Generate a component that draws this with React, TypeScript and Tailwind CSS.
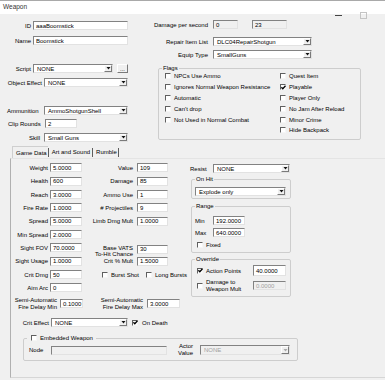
import type { ReactNode } from "react";

const sunken = "border border-t-[#828282] border-l-[#828282] border-r-[#e2e2e2] border-b-[#e2e2e2]";

const Field = ({ value = "", className = "", disabled = false, flat = false }: { value?: string; className?: string; disabled?: boolean; flat?: boolean }) => (
  <div
    className={`${className} shrink-0 flex items-center pl-[2px] whitespace-nowrap overflow-hidden ${sunken} ${
      disabled ? "bg-[#f0f0f0] text-[#a0a0a0]" : flat ? "bg-[#f0f0f0]" : "bg-white"
    }`}
  >
    {value}
  </div>
);

const Combo = ({ value, className = "", disabled = false }: { value: string; className?: string; disabled?: boolean }) => (
  <div className={`${className} shrink-0 flex ${sunken} ${disabled ? "bg-[#f0f0f0] text-[#a0a0a0]" : "bg-white"}`}>
    <span className="flex-1 min-w-0 flex items-center pl-[3px] whitespace-nowrap overflow-hidden">{value}</span>
    <span className="w-[8px] shrink-0 flex items-center justify-center bg-[#f0f0f0] border border-t-white border-l-white border-r-[#7a7a7a] border-b-[#7a7a7a]">
      <svg width="5" height="3" viewBox="0 0 5 3">
        <path d="M0.5 0h4L2.5 2.6z" fill={disabled ? "#a8a8a8" : "#111"} />
      </svg>
    </span>
  </div>
);

const Check = ({ checked = false }: { checked?: boolean }) => (
  <span className="w-[6px] h-[6px] shrink-0 flex items-center justify-center bg-white border border-t-[#5f5f5f] border-l-[#5f5f5f] border-r-[#f6f6f6] border-b-[#f6f6f6]">
    {checked && (
      <svg width="5" height="5" viewBox="0 0 5 5" className="shrink-0 overflow-visible">
        <path d="M0.4 2.3 1.8 3.8 4.5 0.8" stroke="#000" strokeWidth="1.3" fill="none" />
      </svg>
    )}
  </span>
);

const CheckItem = ({ label, checked = false, className = "" }: { label: ReactNode; checked?: boolean; className?: string }) => (
  <div className={`flex items-center gap-[3px] ${className}`}>
    <Check checked={checked} />
    <span className="whitespace-nowrap">{label}</span>
  </div>
);

const Group = ({ title, className = "", children }: { title: ReactNode; className?: string; children?: ReactNode }) => (
  <fieldset className={`${className} shrink-0 border border-[#cdcdcd] rounded-[2px]`}>
    <legend className="ml-[3px] px-[1px] h-[6px] leading-[6px] flex items-center">{title}</legend>
    {children}
  </fieldset>
);

const StatRow = ({ l1, v1, l2, v2 }: { l1: string; v1: string; l2?: string; v2?: string }) => (
  <div className="h-[13.33px] flex items-center">
    <span className="w-[37px] text-right whitespace-nowrap">{l1}</span>
    <Field value={v1} className="ml-[2px] w-[32px] h-[9px]" />
    {l2 && <span className="w-[51px] text-right whitespace-nowrap">{l2}</span>}
    {v2 !== undefined && <Field value={v2} className="ml-[4px] w-[31px] h-[9px]" />}
  </div>
);

export default function App() {
  return (
    <div className="relative w-[385px] h-[380px] overflow-hidden bg-[#f0f0f0] text-[6px] leading-none text-black font-['Liberation_Sans',Arial,sans-serif] flex flex-col">
      {/* title bar */}
      <div className="h-[14px] shrink-0 bg-white border-t border-[#a9a9a9] flex items-center pl-[3px] text-[6.5px] text-[#333]">Weapon</div>
      <div className="absolute top-[15px] left-[335px] w-[7px] h-px bg-[#444]" />
      <div className="absolute top-[12px] left-[360px] w-[7px] h-[7px] border border-[#c4c4c4]" />

      {/* top section */}
      <div className="flex h-[132px] shrink-0">
        <div className="w-[150px] shrink-0 flex flex-col">
          <div className="flex items-center mt-[7px]">
            <span className="w-[31px] text-right">ID</span>
            <Field value="aaaBoomstick" className="ml-[2px] w-[95px] h-[9px]" />
          </div>
          <div className="flex items-center mt-[6px]">
            <span className="w-[31px] text-right">Name</span>
            <Field value="Boomstick" className="ml-[2px] w-[95px] h-[9px]" />
          </div>
          <div className="flex items-center mt-[19px]">
            <span className="w-[31px] text-right">Script</span>
            <Combo value="NONE" className="ml-[2px] w-[80px] h-[9px]" />
            <div className="ml-[4px] w-[11px] h-[9px] bg-[#f0f0f0] border border-t-white border-l-white border-r-[#7a7a7a] border-b-[#7a7a7a] flex items-end justify-center leading-[6px]">...</div>
          </div>
          <div className="flex items-center mt-[5px]">
            <span className="w-[42px] text-right whitespace-nowrap">Object Effect</span>
            <Combo value="NONE" className="ml-[2px] w-[84px] h-[9px]" />
          </div>
          <div className="flex items-center mt-[19px]">
            <span className="w-[37px] pl-[7px] whitespace-nowrap">Ammunition</span>
            <Combo value="AmmoShotgunShell" className="ml-[7px] w-[84px] h-[9px]" />
          </div>
          <div className="flex items-center mt-[4px]">
            <span className="w-[43px] pl-[8px] whitespace-nowrap">Clip Rounds</span>
            <Field value="2" className="ml-[2px] w-[32px] h-[9px]" />
          </div>
          <div className="flex items-center mt-[5px]">
            <span className="w-[40px] text-right">Skill</span>
            <Combo value="Small Guns" className="ml-[4px] w-[84px] h-[9px]" />
          </div>
        </div>

        <div className="flex-1 flex flex-col">
          <div className="flex items-center mt-[6px]">
            <span className="w-[58px] text-right whitespace-nowrap">Damage per second</span>
            <Field value="0" flat className="ml-[5px] w-[25px] h-[9px]" />
            <Field value="23" flat className="ml-[14px] w-[35px] h-[9px]" />
          </div>
          <div className="flex items-center mt-[8px]">
            <span className="w-[58px] text-right whitespace-nowrap">Repair Item List</span>
            <Combo value="DLC04RepairShotgun" className="ml-[5px] w-[99px] h-[9px]" />
          </div>
          <div className="flex items-center mt-[4px]">
            <span className="w-[58px] text-right whitespace-nowrap">Equip Type</span>
            <Combo value="SmallGuns" className="ml-[5px] w-[99px] h-[9px]" />
          </div>
          <Group title="Flags" className="mt-[6px] ml-[8px] w-[203px] h-[75px]">
            <div className="grid grid-cols-[115px_1fr] pl-[6px]">
              <CheckItem label="NPCs Use Ammo" className="h-[10.8px]" />
              <CheckItem label="Quest Item" className="h-[10.8px]" />
              <CheckItem label="Ignores Normal Weapon Resistance" className="h-[10.8px]" />
              <CheckItem label="Playable" checked className="h-[10.8px]" />
              <CheckItem label="Automatic" className="h-[10.8px]" />
              <CheckItem label="Player Only" className="h-[10.8px]" />
              <CheckItem label="Can't drop" className="h-[10.8px]" />
              <CheckItem label="No Jam After Reload" className="h-[10.8px]" />
              <CheckItem label="Not Used in Normal Combat" className="h-[10.8px]" />
              <CheckItem label="Minor Crime" className="h-[10.8px]" />
              <div className="h-[10.8px]" />
              <CheckItem label="Hide Backpack" className="h-[10.8px]" />
            </div>
          </Group>
        </div>
      </div>

      {/* tabs */}
      <div className="flex h-[12px] shrink-0 ml-[12px] items-stretch">
        <div className="border-l border-t border-[#cfcfcf] pl-[3px] pr-[1px] flex items-center bg-[#f0f0f0]">Game Data</div>
        <span className="w-px h-[9px] self-center bg-[#5e5e5e]" />
        <div className="pl-[3px] pr-[2px] flex items-center">Art and Sound</div>
        <span className="w-px h-[9px] self-center bg-[#5e5e5e]" />
        <div className="pl-[3px] pr-[1px] flex items-center">Rumble</div>
        <span className="w-px h-[9px] self-center bg-[#5e5e5e]" />
      </div>

      {/* tab page */}
      <div className="flex-1 ml-[10px] mb-[2px] border-l border-b border-t border-l-[#b0b0b0] border-b-[#d6d6d6] border-t-[#e4e4e4] flex flex-col">
        <div className="flex h-[138px] shrink-0">
          <div className="w-[179px] shrink-0 flex flex-col pt-[2.3px]">
            <StatRow l1="Weight" v1="5.0000" l2="Value" v2="109" />
            <StatRow l1="Health" v1="600" l2="Damage" v2="85" />
            <StatRow l1="Reach" v1="3.0000" l2="Ammo Use" v2="1" />
            <StatRow l1="Fire Rate" v1="1.0000" l2="# Projectiles" v2="9" />
            <StatRow l1="Spread" v1="5.0000" l2="Limb Dmg Mult" v2="1.0000" />
            <StatRow l1="Min Spread" v1="2.0000" />
            <div className="h-[13.33px] flex items-center">
              <span className="w-[37px] text-right whitespace-nowrap">Sight FOV</span>
              <Field value="70.0000" className="ml-[2px] w-[32px] h-[9px]" />
              <span className="w-[51px] text-right whitespace-nowrap leading-[6px] mt-[6px]">
                Base VATS
                <br />
                To-Hit Chance
              </span>
              <Field value="30" className="ml-[4px] w-[31px] h-[9px] mt-[3px]" />
            </div>
            <StatRow l1="Sight Usage" v1="1.0000" l2="Crit % Mult" v2="1.5000" />
            <div className="h-[13.33px] flex items-center">
              <span className="w-[37px] text-right whitespace-nowrap">Crit Dmg</span>
              <Field value="50" className="ml-[2px] w-[32px] h-[9px]" />
              <CheckItem label="Burst Shot" className="ml-[20px]" />
              <CheckItem label="Long Bursts" className="ml-[7px]" />
            </div>
            <StatRow l1="Aim Arc" v1="0" />
          </div>

          <div className="flex-1 flex flex-col">
            <div className="flex items-center mt-[5px]">
              <span className="w-[23px]">Resist</span>
              <Combo value="NONE" className="w-[77px] h-[9px]" />
            </div>
            <Group title="On Hit" className="mt-[3px] ml-[1px] w-[100px] pb-[2px]">
              <Combo value="Explode only" className="mt-[5px] ml-[3px] w-[91px] h-[9px]" />
            </Group>
            <Group title="Range" className="mt-[4px] ml-[1px] w-[100px] pb-[3px]">
              <div className="flex items-center mt-[7px] pl-[3px]">
                <span className="w-[18px]">Min</span>
                <Field value="192.0000" className="w-[32px] h-[9px]" />
              </div>
              <div className="flex items-center mt-[3px] pl-[3px]">
                <span className="w-[18px]">Max</span>
                <Field value="640.0000" className="w-[32px] h-[9px]" />
              </div>
              <CheckItem label="Fixed" className="mt-[4px] h-[8px] ml-[5px]" />
            </Group>
            <Group title="Override" className="mt-[3px] ml-[1px] w-[100px] pb-[6px]">
              <div className="flex items-center mt-[3px] h-[11px] pl-[5px] pr-[4px]">
                <CheckItem label="Action Points" checked />
                <Field value="40.0000" className="ml-auto w-[33px] h-[11px]" />
              </div>
              <div className="flex items-center mt-[5px] h-[9px] pl-[5px] pr-[4px]">
                <Check />
                <span className="ml-[3px] leading-[7px] whitespace-nowrap">
                  Damage to
                  <br />
                  Weapon Mult
                </span>
                <Field value="0.0000" disabled className="ml-auto w-[33px] h-[9px]" />
              </div>
            </Group>
          </div>
        </div>

        <div className="flex items-center h-[13px] shrink-0">
          <span className="w-[46px] text-right leading-[7px] whitespace-nowrap">
            Semi-Automatic
            <br />
            Fire Delay Min
          </span>
          <Field value="0.1000" className="ml-[3px] w-[23px] h-[9px]" />
          <span className="w-[60px] text-right leading-[7px] whitespace-nowrap">
            Semi-Automatic
            <br />
            Fire Delay Max
          </span>
          <Field value="3.0000" className="ml-[4px] w-[33px] h-[9px]" />
        </div>

        <div className="flex items-center mt-[8px] h-[9px]">
          <span className="w-[38px] text-right whitespace-nowrap">Crit Effect</span>
          <Combo value="NONE" className="ml-[2px] w-[77px] h-[9px]" />
          <CheckItem label="On Death" checked className="ml-[4px] gap-[4px]" />
        </div>

        <Group
          title={<CheckItem label="Embedded Weapon" className="ml-[3px] bg-[#f0f0f0] pr-[2px]" />}
          className="mt-[8px] ml-[12px] w-[275px] pb-[5px]"
        >
          <div className="flex items-center mt-[4px] h-[10px] pl-[5px]">
            <span className="w-[22px]">Node</span>
            <Field disabled className="w-[116px] h-[9px]" />
            <span className="w-[26px] text-right leading-[7px]">
              Actor
              <br />
              Value
            </span>
            <Combo value="NONE" disabled className="ml-[7px] w-[90px] h-[10px]" />
          </div>
        </Group>
      </div>
    </div>
  );
}
